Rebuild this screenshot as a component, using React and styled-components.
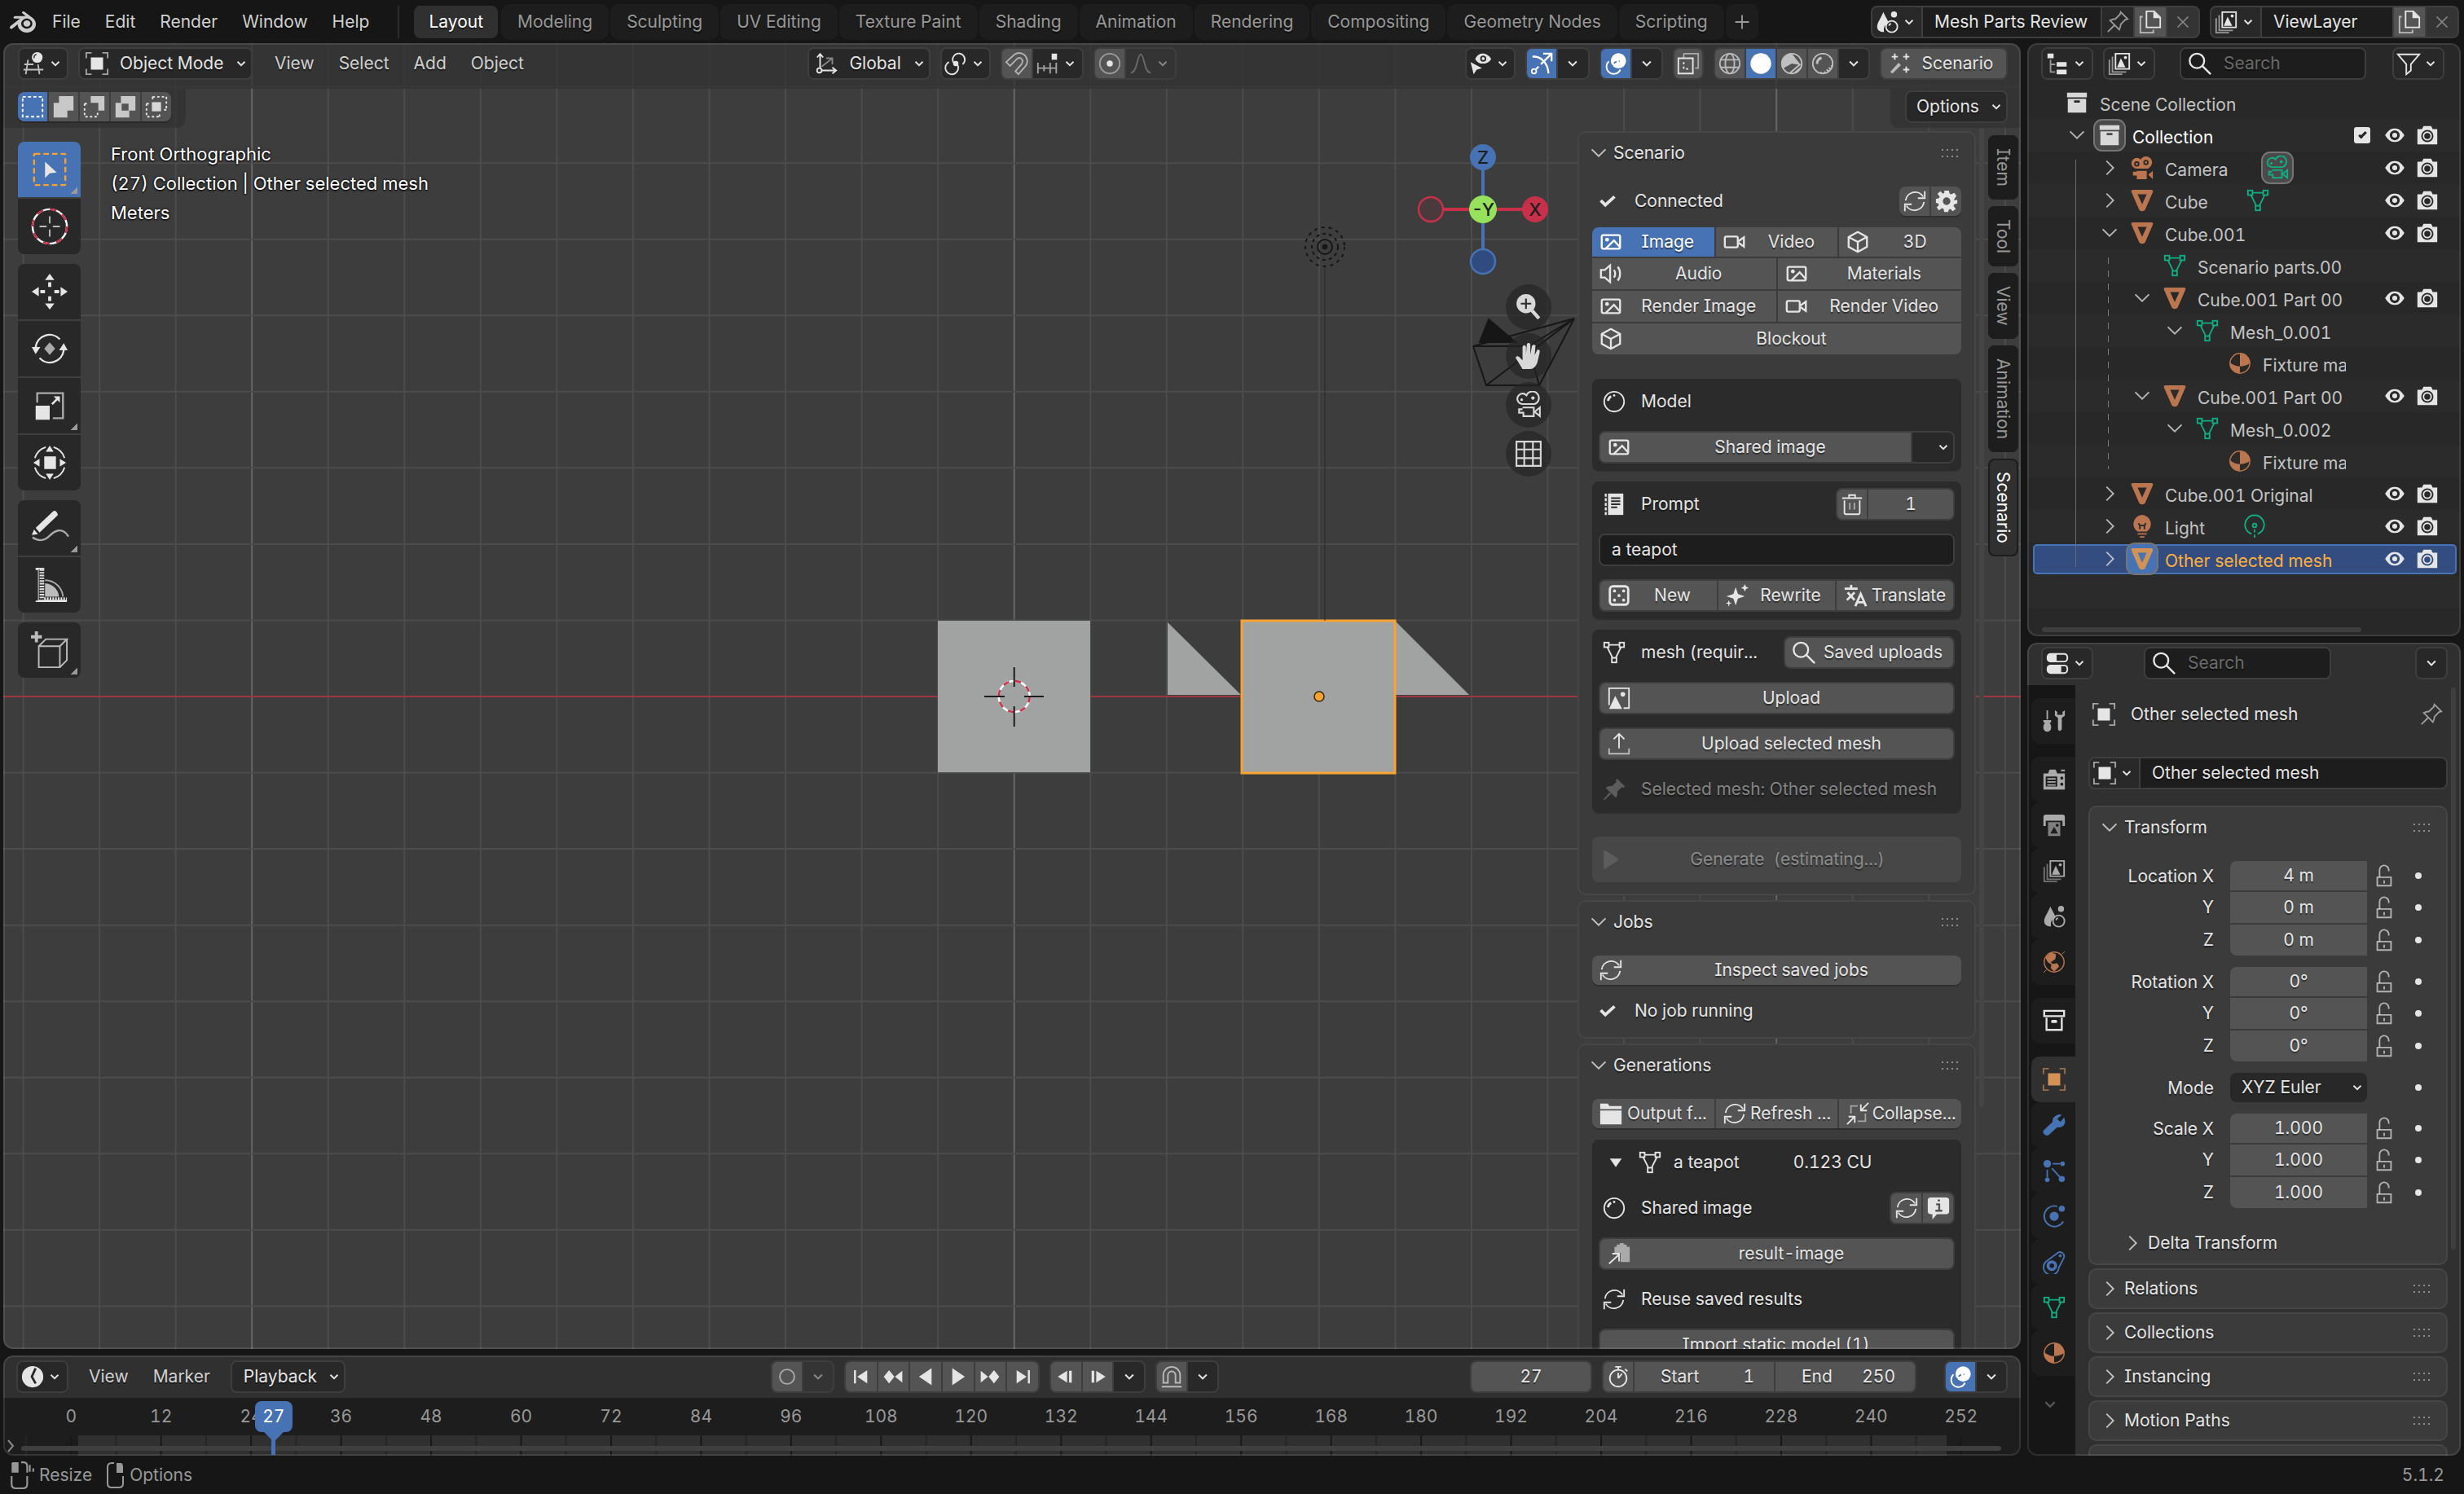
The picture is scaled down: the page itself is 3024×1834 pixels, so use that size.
import React from "react";
import styled, { createGlobalStyle, css } from "styled-components";
import { SiBlender } from "react-icons/si";

/* ---------- tokens ---------- */
const c = {
  app: "#161616",
  view: "#3d3d3d",
  panel: "#3b3b3b",
  box: "#2b2b2b",
  header: "#303030",
  menu: "#282828",
  field: "#1d1d1d",
  button: "#545454",
  outline: "#3e3e3e",
  edge: "#464646",
  text: "#e5e5e5",
  dim: "#989898",
  faint: "#6a6a6a",
  blue: "#4772b3",
  orange: "#bb7650",
  green: "#0fae83",
};

const Global = createGlobalStyle`
  *, *::before, *::after { box-sizing: border-box; }
  body {
    margin: 0;
    background: ${c.app};
    color: ${c.text};
    font: 21px/36px Inter, "Liberation Sans", sans-serif;
    font-feature-settings: "cv08", "tnum";
    overflow: hidden;
  }
  button, input, select {
    font: inherit;
    font-feature-settings: inherit;
    color: inherit;
    margin: 0;
    padding: 0;
    border: 0;
    border-radius: 0;
    background: none;
    outline: none;
    text-shadow: inherit;
  }
  h2 { font: inherit; margin: 0; }
`;

/* ---------- icons ---------- */
const L = { fill: "none", stroke: "currentColor", strokeWidth: 2 };
const meshGlyph = (
  <g {...L}>
    <rect x="3" y="3" width="6" height="6" />
    <rect x="23" y="3" width="6" height="6" />
    <rect x="13" y="23" width="6" height="6" />
    <path d="M9 6H23M7 9L14 23M25 9L18 23" />
  </g>
);
const objGlyph = (
  <>
    <rect x="8" y="8" width="16" height="16" />
    <path d="M2 9V2H9M23 2H30V9M30 23V30H23M9 30H2V23" {...L} opacity=".65" />
  </>
);
const cineGlyph = (
  <>
    <g {...L}>
      <path d="M9 15A6 6 0 1 1 13.500 5A7.500 7.500 0 1 1 23 15Z" />
      <path d="M9 19H22V29H10V25H5V21H9M23 24L29 19V29Z" />
    </g>
    <circle cx="8" cy="10" r="1.6" />
    <circle cx="21" cy="8" r="2" />
  </>
);
const layersGlyph = (
  <>
    <path d="M11 3H29V23H11Z" {...L} />
    <path d="M13 21L18 9L24 21Z" />
    <circle cx="24" cy="8" r="2" />
    <path d="M7 7V27H25M3 11V30H20" {...L} opacity=".6" />
  </>
);
const sceneGlyph = (
  <>
    <path d="M11 3C8 11 3 17 3 22C3 27 7 29 12 29C11 23 13 19 18 17C16 12 13 8 11 3Z" />
    <circle cx="25" cy="6" r="4" />
    <circle cx="22" cy="22" r="7.5" {...L} />
    <path d="M18.500 21A4 4 0 0 1 21 18" {...L} />
  </>
);
const glyphs = {
  view3d: (
    <>
      <path d="M4 17H16M9 11L6 30M22 17L24 30M3 24H29" {...L} opacity=".8" />
      <circle cx="21" cy="8" r="7" />
      <path d="M17 9A4 4 0 0 1 20 4" fill="none" stroke="#282828" strokeWidth="1.500" />
    </>
  ),
  object: objGlyph,
  orient: (
    <>
      <path d="M8 22V4M4 8L8 3.500L12 8M10 25H28M24 21L29 25L24 29" {...L} />
      <circle cx="7" cy="25" r="3" {...L} />
      <path d="M10 20L23 10M16 9H24V17" {...L} opacity=".5" />
    </>
  ),
  pivot: (
    <>
      <path d="M13 15A8 8 0 1 1 25 17M18 17A8.500 8.500 0 1 1 7 14" {...L} />
      <circle cx="16" cy="16" r="3.500" />
    </>
  ),
  magnet: (
    <path
      d="M2 14L13 4C19 0 27 3 29 10C31 15 28 19 25 22L18 30L14 26L22 17C24 14 24 11 21 9C19 8 17 9 16 10L7 19Z"
      {...L}
      opacity=".65"
    />
  ),
  snap: (
    <>
      <rect x="21" y="3" width="7" height="8" />
      <path d="M3 15V29M11 18V26M19 15V29M27 15V29M3 22H28" {...L} opacity=".65" />
    </>
  ),
  prop: (
    <>
      <circle cx="16" cy="16" r="13" {...L} opacity=".5" />
      <circle cx="16" cy="16" r="4" />
    </>
  ),
  falloff: <path d="M3 28C12 28 11 4 16 4S20 28 29 28" {...L} opacity=".6" />,
  visible: (
    <>
      <path d="M9 10C12 4 16 3 19 3S27 5 30 10C27 15 23 16 19 16S12 15 9 10Z" />
      <circle cx="19.500" cy="9.500" r="4" fill="#282828" />
      <circle cx="19.500" cy="9.500" r="2" />
      <path d="M3 14L18 22L11 24L7 30Z" />
    </>
  ),
  gizmo: (
    <>
      <path d="M18 3H29V13M29 3L15 17M4 7C14 6 24 14 25 29M12 20L9 23" {...L} strokeWidth="2.500" />
      <circle cx="6" cy="26" r="3" {...L} />
    </>
  ),
  overlay: (
    <>
      <circle cx="19.500" cy="12.500" r="10" />
      <path d="M7 13A9.500 9.500 0 1 0 22 24" {...L} />
      <path d="M11 22A9 9 0 0 1 21 13" fill="none" stroke="#4772b3" strokeWidth="2" strokeDasharray="4 3" />
    </>
  ),
  xray: (
    <>
      <path d="M3 9H22V29H3Z" {...L} />
      <path d="M10 3H29V22H25M10 3V9" {...L} opacity=".6" />
      <path d="M10 14V23H16" {...L} strokeDasharray="3 3" />
    </>
  ),
  wire: (
    <g {...L} opacity=".7">
      <circle cx="16" cy="16" r="13" />
      <ellipse cx="16" cy="16" rx="6" ry="13" />
      <path d="M4 11H28M4 21H28" />
    </g>
  ),
  solid: <circle cx="16" cy="16" r="13.500" />,
  matprev: (
    <g opacity=".75">
      <circle cx="16" cy="16" r="13" {...L} />
      <path d="M16 3V16L28 18M16 16L5 22A13 13 0 0 1 16 3Z" />
      <path d="M14 28L27 17M20 28L28 21" {...L} />
    </g>
  ),
  rendered: (
    <g opacity=".75">
      <circle cx="16" cy="16" r="13" {...L} />
      <path d="M7 16A9 9 0 0 1 14 7L15 10A7 7 0 0 0 10 17Z" />
      <path d="M18 28L28 19M22 26L27 22M13 28L16 28" {...L} strokeDasharray="2 2" />
    </g>
  ),
  wand: (
    <>
      <path d="M3 27L14 15L17 18L6 29Z" opacity=".7" />
      <path d="M9 3V11M5 7H13M24 3V11M20 7H28M24 20V28M20 24H28" {...L} />
    </>
  ),
  selNew: <rect x="3" y="3" width="26" height="26" {...L} strokeDasharray="4 3" />,
  selAdd: <path d="M10 2H29V21H21V30H3V11H10Z" opacity=".8" />,
  selSub: (
    <>
      <path d="M11 2H29V21H21V11H11Z" opacity=".8" />
      <path d="M3 12V29H20V22M3 12H8" {...L} strokeDasharray="3 3" />
    </>
  ),
  selInv: <path fillRule="evenodd" opacity=".8" d="M10 2H29V21H21V30H3V11H10ZM11 12V21H20V12Z" />,
  selAnd: (
    <>
      <rect x="10" y="10" width="12" height="12" opacity=".9" />
      <path d="M11 3H29V20M11 3V7M3 12V29H20M3 12H7M20 29V24M29 20H25" {...L} strokeDasharray="3 3" />
    </>
  ),
  down: <path d="M10 13L16 19L22 13" {...L} strokeWidth="2.500" />,
  downBig: <path d="M7 11L16 20L25 11" {...L} opacity=".8" />,
  right: <path d="M12 7L21 16L12 25" {...L} opacity=".8" />,
  plus: <path d="M16 7V25M7 16H25" {...L} />,
  cross: <path d="M8 8L24 24M24 8L8 24" {...L} />,
  check: <path d="M7 15L13 21L25 10" {...L} strokeWidth="4" />,
  refresh: <path d="M4 15A12.500 12.500 0 0 1 27 10M29 3V12H20M28 17A12.500 12.500 0 0 1 5 22M3 29V20H12" {...L} />,
  gear: (
    <path
      fillRule="evenodd"
      d="M13 2H19L20 6L22 7L26 5L29 9L26 13V15L30 14V19L26 20L25 22L28 26L24 29L21 26L19 27L18 30H13L12 26L10 25L6 28L3 24L6 21L5 19L2 18V13L6 12L7 10L4 6L8 3L11 6L13 5ZM16 11A5 5 0 1 0 16 21A5 5 0 1 0 16 11Z"
    />
  ),
  image: (
    <>
      <path d="M6 7H26A2 2 0 0 1 28 9V23A2 2 0 0 1 26 25H6A2 2 0 0 1 4 23V9A2 2 0 0 1 6 7Z" {...L} strokeWidth="2.500" />
      <path d="M9 25L20 14L28 23" {...L} strokeWidth="2.500" />
      <circle cx="11" cy="13" r="2.500" />
    </>
  ),
  video: (
    <>
      <rect x="3" y="9" width="17" height="14" rx="2" {...L} strokeWidth="2.500" />
      <path d="M21 15L28 10V22L21 17" {...L} strokeWidth="2.500" />
    </>
  ),
  cube: <path d="M16 3L28 9.500V22.500L16 29L4 22.500V9.500ZM4 9.500L16 16L28 9.500M16 16V29" {...L} strokeWidth="2.500" />,
  audio: <path d="M3 11H8L15 5V27L8 21H3ZM20 11C22 14 22 18 20 21M25 7C29 12 29 20 25 25" {...L} strokeWidth="2.500" />,
  sphere: (
    <>
      <circle cx="16" cy="16" r="13" {...L} />
      <path d="M8 15A8 8 0 0 1 12 9" {...L} strokeWidth="3" />
      <circle cx="16" cy="8" r="1.500" />
    </>
  ),
  trash: (
    <>
      <path d="M3 8H29M12 8V4H20V8M6 11V27Q6 29 8 29H24Q26 29 26 27V11" {...L} />
      <path d="M13 14V23M19 14V23" {...L} opacity=".6" />
    </>
  ),
  notebook: (
    <>
      <path d="M8 2H28V30H8Z" />
      <path d="M5 2V30" {...L} strokeDasharray="4 2" strokeWidth="2.500" />
      <path d="M12 8H24M12 12H24M12 16H24M12 20H20" stroke="#2b2b2b" strokeWidth="2" />
    </>
  ),
  dice: (
    <>
      <rect x="4" y="4" width="24" height="24" rx="4" {...L} strokeWidth="3" />
      {[[10, 10], [22, 10], [16, 16], [10, 22], [22, 22]].map(([x, y]) => (
        <circle key={`${x}${y}`} cx={x} cy={y} r="2" />
      ))}
    </>
  ),
  sparkles: (
    <>
      <path d="M14 5L17 14L26 17L17 20L14 29L11 20L2 17L11 14Z" />
      <path d="M26 1L27.500 4.500L31 6L27.500 7.500L26 11L24.500 7.500L21 6L24.500 4.500ZM5 22L6 25L9 26L6 27L5 31L4 27L1 26L4 25Z" />
    </>
  ),
  translate: <path d="M2 7H19M10.500 2V7M6 12L15 22M15 12L5 22M16 30L23 14L30 30M18 25H28" {...L} strokeWidth="3" />,
  mesh: meshGlyph,
  search: <path d="M12 3A9.500 9.500 0 1 1 12 22A9.500 9.500 0 1 1 12 3ZM19 19L30 30" {...L} strokeWidth="2.500" />,
  picture: (
    <>
      <path d="M3 25V3H29V29H22" {...L} />
      <path d="M3 30L11 13L20 30Z" />
      <circle cx="21" cy="11" r="3" />
    </>
  ),
  upload: (
    <>
      <path d="M16 22V4M9 10L16 3L23 10" {...L} />
      <path d="M3 22V29H29V22" {...L} opacity=".7" />
    </>
  ),
  pin: <path d="M20 2L30 12L28 14L26 13L20 19C21 22 20 25 18 27L5 14C7 12 10 11 13 12L19 6L18 4ZM10 20L12 22L3 30L2 29Z" />,
  pinLine: <path d="M20 3L29 12L26 13L20 19C20 22 19 24 18 26L6 14C8 13 10 12 13 12L19 6ZM12 20L3 29" {...L} opacity=".6" />,
  play: <path d="M5 3Q5 1 7 2L26 14Q28 16 26 18L7 30Q5 31 5 29Z" />,
  folder: <path d="M2 3H12L14 6H30V10H2ZM2 12H30V30H2Z" />,
  collapse: (
    <>
      <path d="M30 2L20 12M20 4V12H28M2 30L12 20M4 20H12V28" {...L} />
      <path d="M7 16V6H16M16 26H26V16" {...L} opacity=".55" />
    </>
  ),
  info: (
    <>
      <path d="M6 2H26Q30 2 30 6V20Q30 24 26 24H14L8 31V24H6Q2 24 2 20V6Q2 2 6 2Z" />
      <path d="M13 11H17V19M12 19.500H21M15 6H18" fill="none" stroke="#545454" strokeWidth="2.500" />
    </>
  ),
  paste: (
    <>
      <path d="M10 7H13V4H17V2H22V4H26V7H30V27H18V15H10Z" opacity=".6" />
      <path d="M3 29L16 17M7 16H16V26" {...L} />
    </>
  ),
  triDown: <path d="M7 10H25L16 23Z" />,
  tree: (
    <>
      <path d="M3 3H11V9H3ZM15 14H28V20H15ZM15 24H28V30H15Z" />
      <path d="M7 11V27H13M7 17H13" {...L} opacity=".6" />
    </>
  ),
  layers: layersGlyph,
  copy: (
    <>
      <path d="M11 2H21L29 10V23H11Z" {...L} />
      <path d="M20 2L29 11H20Z" />
      <path d="M6 9H3V30H20V26" {...L} opacity=".7" />
    </>
  ),
  filter: <path d="M2 4H30L19 17V25L13 30V17Z" {...L} />,
  collection: (
    <path fillRule="evenodd" d="M3 3H29V9H3ZM4 11H28V29H4ZM13 13Q12 13 12 14.500T13 16H19Q20 16 20 14.500T19 13Z" />
  ),
  collectionLine: (
    <>
      <path d="M3 3H29V10H3ZM6 12V28H26V12" {...L} strokeWidth="2.500" />
      <rect x="12" y="15" width="8" height="4" rx="2" />
    </>
  ),
  eye: (
    <>
      <path d="M2.500 16C8 7 12 6.500 16 6.500S24 7 29.500 16C24 25 20 25.500 16 25.500S8 25 2.500 16Z" />
      <circle cx="16" cy="16" r="7" fill="var(--row,#282828)" />
      <circle cx="16" cy="16" r="3.500" />
    </>
  ),
  camera: (
    <>
      <path d="M3 8H9L11 4H21L23 8H29V28H3Z" />
      <circle cx="16" cy="17" r="8" fill="var(--row,#282828)" />
      <circle cx="16" cy="17" r="5" fill="none" stroke="currentColor" strokeWidth="2" />
    </>
  ),
  cine: cineGlyph,
  cineSolid: (
    <>
      <circle cx="9" cy="10" r="7" />
      <circle cx="21" cy="9" r="8" />
      <path d="M8 12H24V17H8ZM9 20H22V31H9V26H4V21H9ZM24 25L30 20V31Z" />
      <g fill="none" stroke="#282828" strokeWidth="2">
        <circle cx="9" cy="11" r="2.500" />
        <circle cx="21" cy="9" r="2.500" />
      </g>
    </>
  ),
  tri: <path fillRule="evenodd" d="M4 2H28Q31 2 30 5L20 28Q19 30 16 30T12 28L2 5Q1 2 4 2ZM10 8L16 21L22 8Z" />,
  material: (
    <>
      <circle cx="16" cy="16" r="13" fill="none" stroke="currentColor" strokeWidth="1.500" />
      <path d="M16 3A13 13 0 0 1 29 16Q23 20 16 20ZM3 15Q9 20 16 20V29A13 13 0 0 1 3 15Z" />
    </>
  ),
  bulb: (
    <>
      <path d="M16 1A12 12 0 0 1 22 23H10A12 12 0 0 1 16 1ZM10 25H22V27H10ZM13 29H19V31H13Z" />
      <path d="M11 12L13 15H19L21 12M13 15V20M19 15V20" fill="none" stroke="#282828" strokeWidth="2" />
    </>
  ),
  lamp: (
    <>
      <path d="M12 26A12.500 12.500 0 1 1 20 26" {...L} />
      <circle cx="16" cy="15" r="2.500" {...L} />
      <path d="M16 20V31" {...L} strokeDasharray="4 3" />
    </>
  ),
  toggles: (
    <>
      <rect x="2" y="3" width="28" height="12" rx="5" />
      <rect x="2" y="18" width="28" height="12" rx="5" />
      <path d="M15 5H25Q28 5 28 9T25 13H15ZM21 20H25Q28 20 28 24T25 28H21Z" fill="#282828" />
    </>
  ),
  tools: (
    <>
      <path d="M6 2H8V14H6ZM2 15H12V18H10L12 22Q13 30 7 30T2 22L4 18H2Z" />
      <path d="M17 2V9L21 12V27Q23 31 26 27V12L30 9V2L27 4V8H20V4Z" />
    </>
  ),
  renderTab: (
    <path
      fillRule="evenodd"
      d="M2 8H8L10 3H18L20 8H30V29H2ZM25 3H30V5H25ZM5 12V25H20V12ZM26 12A2 2 0 1 0 26 16A2 2 0 1 0 26 12ZM26 20A2 2 0 1 0 26 24A2 2 0 1 0 26 20ZM7 14H18V16H7ZM7 18H18V20H7ZM7 22H18V24H7Z"
    />
  ),
  outputTab: (
    <>
      <path d="M5 2H27Q30 2 30 5V17H27V10H5V17H2V5Q2 2 5 2Z" />
      <path fillRule="evenodd" d="M8 12H24V30H8ZM11 27H21L16 18ZM20 14A2 2 0 1 0 20 18A2 2 0 1 0 20 14Z" opacity=".7" />
    </>
  ),
  scene: sceneGlyph,
  world: (
    <>
      <circle cx="16" cy="16" r="13" {...L} strokeWidth="1.500" />
      <path d="M5 10L12 4L18 6L17 12L11 16L14 19L20 18L22 22L16 28L12 24L13 19L8 16ZM26 6L30 2M6 26L2 30" stroke="currentColor" />
    </>
  ),
  wrench: <path d="M18 4Q22 1 26 3L20 8L24 12L29 6Q32 13 28 17Q25 20 20 19L9 29Q6 31 3 28T3 22L14 12Q13 7 18 4Z" />,
  particles: (
    <>
      <circle cx="7" cy="7" r="5" />
      <circle cx="27" cy="7" r="3" />
      <circle cx="7" cy="28" r="3" />
      <circle cx="26" cy="27" r="4" />
      <path d="M14 7H24M7 15V25M13 13L24 25" {...L} />
    </>
  ),
  physics: (
    <>
      <circle cx="16" cy="16" r="6" />
      <circle cx="26" cy="6" r="4" />
      <path d="M20 3A13.500 13.500 0 1 0 28 23" {...L} />
    </>
  ),
  constraint: (
    <>
      <path d="M5 16L21 4A5.500 5.500 0 0 1 29 10L22 24A10 10 0 1 1 5 16Z" {...L} />
      <circle cx="13" cy="21" r="5" fill="none" stroke="currentColor" strokeWidth="4" />
      <circle cx="24" cy="8" r="2" />
    </>
  ),
  lock: (
    <>
      <path d="M7 18H25V29H7Z" {...L} opacity=".7" />
      <path d="M10 18V9A6 6 0 0 1 22 8V10M16 22V26" {...L} opacity=".7" />
    </>
  ),
  clock: (
    <>
      <circle cx="16" cy="16" r="14" />
      <path d="M20 5L15 16L20 25" fill="none" stroke="#282828" strokeWidth="3" />
    </>
  ),
  ring: <circle cx="16" cy="16" r="9.500" {...L} opacity=".6" />,
  toStart: <path d="M5 6H8V26H5ZM25 6V26L10 16Z" />,
  prevKey: <path d="M10 6L18 16L10 26L2 16ZM30 7V25L19 16Z" />,
  playBack: <path d="M25 3V29L6 16Z" />,
  playFwd: <path d="M7 3V29L26 16Z" />,
  nextKey: <path d="M22 6L30 16L22 26L14 16ZM2 7V25L13 16Z" />,
  toEnd: <path d="M24 6H27V26H24ZM7 6V26L22 16Z" />,
  stepBack: <path d="M18 7V25L4 16ZM21 7H25V25H21Z" />,
  stepFwd: <path d="M14 7V25L28 16ZM7 7H11V25H7Z" />,
  magnetUp: (
    <g {...L} opacity=".7">
      <path d="M5 24V14A11 11 0 0 1 27 14V24H21V14A5 5 0 0 0 11 14V24ZM3 29H29" />
    </g>
  ),
  stopwatch: (
    <>
      <circle cx="16" cy="18" r="11" {...L} />
      <path d="M12 3H20M16 3V7M16 18L21 12M16 18V11M25 6L28 9" {...L} />
    </>
  ),
  mouseL: (
    <>
      <path d="M4 13V2Q4 1 6 1H12V13Z" />
      <path d="M4 17V26Q4 31 9 31H17Q22 31 22 26V17M15 1H18Q22 1 22 6V13M25 4V12M29 8V12" {...L} />
    </>
  ),
  mouseR: (
    <>
      <path d="M14 13V1H20Q22 2 22 5V13Z" />
      <path d="M3 17V26Q3 31 8 31H17Q22 31 22 26V17M11 1H8Q3 1 3 6V17" {...L} />
    </>
  ),
  zoomIn: (
    <>
      <circle cx="13" cy="12" r="11" />
      <path d="M20 20L28 29" {...L} strokeWidth="4" />
      <path d="M7 12H19M13 6V18" stroke="#2b2b2b" strokeWidth="2" />
    </>
  ),
  hand: (
    <path d="M9 31Q6 26 1 18Q2 15 5 17L9 21V5Q11 2 13 5V14L14 2Q16 0 18 2V14L20 4Q22 2 24 4L23 15L26 9Q29 8 29 11L26 24Q23 31 18 31Z" />
  ),
  grid: <path d="M2 2H30V30H2ZM11 2V30M21 2V30M2 11H30M2 21H30" {...L} />,
};
const Svg = styled.svg`
  flex: none;
  display: block;
  width: ${(p) => p.$w}px;
  height: ${(p) => p.$s}px;
  color: ${(p) => p.$c || "inherit"};
  fill: currentColor;
`;
const Icon = ({ n, s = 30, color }) => (
  <Svg viewBox="0 0 32 32" $s={s} $w={s} $c={color} aria-hidden="true">
    {glyphs[n]}
  </Svg>
);

const tool = {
  box: (
    <>
      <rect x="4" y="4" width="40" height="40" rx="1" fill="none" stroke="#f7a231" strokeWidth="2.500" strokeDasharray="7 4" />
      <path d="M18 14L33 28L24 29L18 35Z" fill="#e5e5e5" />
    </>
  ),
  cursor: (
    <>
      <circle cx="24" cy="24" r="22" fill="none" stroke="#fff" strokeWidth="2.500" />
      <circle cx="24" cy="24" r="22" fill="none" stroke="#c8304a" strokeWidth="2.500" strokeDasharray="8.600 8.600" />
      <path d="M24 11V20M24 28V37M11 24H20M28 24H37" stroke="#bbb" strokeWidth="2" />
    </>
  ),
  move: (
    <path
      fill="#e5e5e5"
      d="M24 1L30 9H18ZM24 47L30 39H18ZM1 24L10 18V30ZM47 24L38 18V30ZM22 12H26V18H22ZM22 30H26V36H22ZM12 22H18V26H12ZM30 22H36V26H30Z"
    />
  ),
  rotate: (
    <>
      <path d="M6 22A18 18 0 0 1 37 12M42 26A18 18 0 0 1 11 36" fill="none" stroke="#e5e5e5" strokeWidth="2.500" />
      <path d="M1 22H12L6 31ZM36 26H47L42 17Z" fill="#e5e5e5" />
      <path d="M24 16L31 24L24 32L17 24Z" fill="#aaa" />
    </>
  ),
  scale: (
    <>
      <path d="M8 20V8H41V40H28" fill="none" stroke="#aaa" strokeWidth="2.500" />
      <path d="M6 24H24V42H6ZM26 21L32 15L29 12H37V20L34 17L28 23Z" fill="#e5e5e5" />
    </>
  ),
  transform: (
    <>
      <path d="M5 18A21 21 0 0 1 19 4M29 4A21 21 0 0 1 43 18M43 30A21 21 0 0 1 29 44M19 44A21 21 0 0 1 5 30" fill="none" stroke="#e5e5e5" strokeWidth="2" />
      <path d="M17 16H32V32H17ZM24 2L29 10H19ZM24 46L29 38H19ZM3 24L11 19V29ZM45 24L37 19V29Z" fill="#e5e5e5" />
    </>
  ),
  annotate: (
    <>
      <path d="M28 3Q31 1 33 4T34 8L11 30L6 24ZM4 26L9 32L1 33Z" fill="#e5e5e5" />
      <path d="M2 36C10 42 18 40 24 34S40 22 48 35" fill="none" stroke="#aaa" strokeWidth="2.500" />
    </>
  ),
  measure: (
    <>
      <path d="M6 2H17V4H10V43H46V46H6V44H9V5H6Z" fill="#e5e5e5" />
      <path d="M14 4V42" stroke="#e5e5e5" strokeWidth="6" strokeDasharray="2 1.500" />
      <path d="M17 42.500H46" stroke="#e5e5e5" strokeWidth="5" strokeDasharray="2 1.500" />
      <path d="M18 22A19 19 0 0 1 36 39H18Z" fill="#bbb" />
      <path d="M18 18A23 23 0 0 1 41 39" fill="none" stroke="#aaa" strokeWidth="2" />
    </>
  ),
  addCube: (
    <>
      <path d="M7 0V14M0 7H14" stroke="#bbb" strokeWidth="4" />
      <path d="M10 19H37V46H10ZM10 19L19 10H46L37 19M46 10V37L37 46" fill="none" stroke="#bbb" strokeWidth="2" />
    </>
  ),
};

/* ---------- shared widgets ---------- */
const shadow = "0 2px 1px rgba(0,0,0,.45)";
const Group = styled.div`
  display: flex;
  flex: none;
  min-width: 0;
  width: ${(p) => (p.$w ? p.$w + "px" : "auto")};
  height: 40px;
  gap: 2px;
  border: 2px solid ${c.outline};
  border-radius: 8px;
  background: ${c.outline};
  overflow: hidden;
  text-shadow: ${shadow};
  ${(p) => p.$flush && css`height: 36px; border: 0; box-shadow: 0 2px 0 rgba(0,0,0,.2);`}
`;
const kinds = {
  plain: css`background: ${c.button};`,
  menu: css`background: ${c.menu};`,
  on: css`background: ${c.blue}; color: #fff;`,
};
const Cell = styled.button`
  display: flex;
  align-items: center;
  justify-content: ${(p) => (p.$end ? "flex-end" : "center")};
  min-width: 0;
  flex: ${(p) => (p.$w ? "none" : "1 1 0")};
  width: ${(p) => (p.$w ? p.$w + "px" : "auto")};
  opacity: ${(p) => (p.$off ? 0.45 : 1)};
  ${(p) => kinds[p.$k || "plain"]}
`;
const IconText = styled(Cell)`
  padding: 0 10px 0 8px;
  gap: 8px;
  justify-content: flex-start;
`;
const Grow = styled.span`
  flex: 1;
  min-width: 0;
  text-align: center;
  white-space: nowrap;
`;
const PickBox = styled.label`
  display: flex;
  align-items: center;
  flex: 1;
  min-width: 0;
  padding: 0 0 0 6px;
  background: ${c.menu};
  select {
    appearance: none;
    flex: 1;
    min-width: 0;
    height: 36px;
    padding-left: ${(p) => p.$pad || 13}px;
  }
`;
const Pick = ({ icon, label, value, pad }) => (
  <PickBox $pad={pad}>
    {icon && <Icon n={icon} />}
    <select aria-label={label} defaultValue={value}>
      <option>{value}</option>
    </select>
    <Icon n="down" s={24} />
  </PickBox>
);
const IconMenu = ({ icon, label, w = 62 }) => (
  <Group $w={w}>
    <Cell $k="menu" aria-label={label}>
      <Icon n={icon} s={30} />
      <Icon n="down" s={24} />
    </Cell>
  </Group>
);
const Field = styled.input`
  flex: 1;
  min-width: 0;
  height: 36px;
  padding: 0 14px;
  background: ${c.field};
  &::placeholder { color: ${c.faint}; opacity: 1; }
`;
const NumField = styled(Field)`
  background: ${c.button};
  padding: 0;
  text-align: center;
  height: auto;
`;
const SearchBox = styled.label`
  display: flex;
  align-items: center;
  flex: 1;
  padding-left: 8px;
  background: ${c.field};
`;
const Search = ({ w }) => (
  <Group $w={w}>
    <SearchBox>
      <Icon n="search" />
      <Field placeholder="Search" aria-label="Search" />
    </SearchBox>
  </Group>
);
const Bar = styled.div`
  display: flex;
  align-items: center;
  gap: ${(p) => p.$gap ?? 12}px;
`;
const MenuLink = styled.button`
  padding: 0 15px;
  color: #d0d0d0;
  text-shadow: ${shadow};
`;

/* ---------- frame ---------- */
const Shell = styled.div`
  display: grid;
  grid-template: 53px minmax(0, 1fr) 47px / minmax(0, 1fr);
  height: 100vh;
  background: ${c.app};
`;
const Work = styled.div`
  display: grid;
  grid-template-columns: minmax(0, 1fr) 532px;
  gap: 8px;
  padding: 0 4px;
  min-height: 0;
`;
const Column = styled.div`
  display: grid;
  grid-template-rows: ${(p) => p.$rows};
  gap: 8px;
  min-height: 0;
`;
const Area = styled.section`
  position: relative;
  display: flex;
  flex-direction: column;
  min-height: 0;
  border-radius: 12px;
  overflow: hidden;
  background: ${(p) => p.$bg};
  &::after {
    content: "";
    position: absolute;
    inset: 0;
    border: 2px solid rgba(255, 255, 255, 0.1);
    border-radius: 12px;
    pointer-events: none;
  }
`;

/* ---------- top bar ---------- */
const Top = styled.header`
  display: flex;
  padding: 5px 6px 4px 12px;
  align-items: center;
`;
const TopMenu = styled.nav`
  display: flex;
  padding: 0 20px 0 5px;
`;
const Rule = styled.div`
  width: 2px;
  height: 40px;
  margin-right: 16px;
  background: #2c2c2c;
`;
const Tabs = styled.div`
  display: flex;
  flex: 1;
  gap: 2px;
`;
const Tab = styled.button`
  height: 44px;
  padding: 0 ${(p) => (p.$on ? 18 : 20)}px;
  border-radius: 10px;
  color: ${(p) => (p.$on ? "#fff" : c.dim)};
  background: ${(p) => (p.$on ? "#303030" : "#1d1d1d")};
  ${(p) => p.$on && css`border: 2px solid ${c.app};`}
  text-shadow: ${shadow};
`;
const AddTab = styled(Tab)`
  padding: 0 5px;
`;
const spaces = ["Layout", "Modeling", "Sculpting", "UV Editing", "Texture Paint", "Shading", "Animation", "Rendering", "Compositing", "Geometry Nodes", "Scripting"];

const TopBar = () => (
  <Top>
    <SiBlender size={32} color="#ccc" />
    <TopMenu>
      {["File", "Edit", "Render", "Window", "Help"].map((m) => (
        <MenuLink key={m}>{m}</MenuLink>
      ))}
    </TopMenu>
    <Rule />
    <Tabs>
      {spaces.map((s, i) => (
        <Tab key={s} $on={i === 0}>{s}</Tab>
      ))}
      <AddTab aria-label="Add workspace"><Icon n="plus" /></AddTab>
    </Tabs>
    <Bar>
      <Group $w={404}>
        <Cell $k="menu" $w={60} aria-label="Scene"><Icon n="scene" /><Icon n="down" s={24} /></Cell>
        <Field defaultValue="Mesh Parts Review" aria-label="Scene name" />
        <Cell $k="menu" $w={38} aria-label="Pin scene"><Icon n="pinLine" /></Cell>
        <Cell $w={38} aria-label="New scene"><Icon n="copy" /></Cell>
        <Cell $k="menu" $w={38} $off aria-label="Delete scene"><Icon n="cross" s={26} /></Cell>
      </Group>
      <Group $w={306}>
        <Cell $k="menu" $w={60} aria-label="View layer"><Icon n="layers" /><Icon n="down" s={24} /></Cell>
        <Field defaultValue="ViewLayer" aria-label="View layer name" />
        <Cell $w={38} aria-label="Add view layer"><Icon n="copy" /></Cell>
        <Cell $k="menu" $w={38} $off aria-label="Remove view layer"><Icon n="cross" s={26} /></Cell>
      </Group>
    </Bar>
  </Top>
);

/* ---------- 3D viewport ---------- */
const Canvas = styled.svg`
  position: absolute;
  inset: 0;
  width: 100%;
  height: 100%;
`;
const U = 93.55;
const CX = 1244.7;
const CY = 855;
const Scene3D = () => (
  <Canvas viewBox="4 53 2476 1603" preserveAspectRatio="xMidYMid slice" aria-hidden="true">
    <g stroke="#4c4c4c" strokeWidth="2">
      {Array.from({ length: 27 }, (_, i) => i - 13).map((i) => (
        <line key={`v${i}`} x1={CX + i * U} x2={CX + i * U} y1="53" y2="1656" stroke={i % 10 ? undefined : "#666"} />
      ))}
      {Array.from({ length: 17 }, (_, i) => i - 8).map((i) => (
        <line key={`h${i}`} y1={CY + i * U} y2={CY + i * U} x1="4" x2="2480" />
      ))}
    </g>
    <line x1="4" x2="2480" y1={CY} y2={CY} stroke="#9c3642" strokeWidth="2" />
    <g fill="#a1a3a2">
      <rect x="1151" y="762" width="187" height="186" />
      <path d="M1433 764L1523 853H1433ZM1712 762L1803 853H1712Z" />
      <rect x="1524" y="762" width="188" height="187" stroke="#f7a231" strokeWidth="3" />
    </g>
    <line x1="1626" x2="1626" y1="326" y2="762" stroke="#2b2b2b" strokeWidth="1" />
    <circle cx="1619" cy="855" r="6" fill="#f7a231" stroke="#3a2400" strokeWidth="1.500" />
    <g fill="none" stroke="#161616">
      <circle cx="1626" cy="303" r="9" strokeWidth="2" />
      <circle cx="1626" cy="303" r="3" fill="#161616" />
      <circle cx="1626" cy="303" r="16" strokeDasharray="4 4" strokeWidth="2" />
      <circle cx="1626" cy="303" r="24" strokeDasharray="4 5" strokeWidth="2" />
    </g>
    <g fill="none" strokeWidth="2.500">
      <circle cx={CX} cy={CY} r="19" stroke="#fff" />
      <circle cx={CX} cy={CY} r="19" stroke="#c8304a" strokeDasharray="7.500 7.500" />
      <path d={`M${CX} 819V843M${CX} 867V892M1208 ${CY}H1233M1257 ${CY}H1281`} stroke="#1c1c1c" strokeWidth="2" />
    </g>
    <g stroke="#161616" strokeWidth="2" fill="none">
      <path d="M1932 391L1808 425H1876L1889 473H1824L1808 425M1932 391L1876 425M1932 391L1824 473M1932 391L1889 473" />
      <path d="M1827 392L1816 420H1860Z" fill="#161616" />
    </g>
  </Canvas>
);
const ViewHeader = styled.div`
  position: relative;
  display: flex;
  padding: 5px 16px 11px 18px;
  background: rgba(48, 48, 48, 0.72);
`;
const Mid = styled(Bar)`margin-left: auto;`;
const End = styled(Bar)`margin-left: auto; padding-left: 20px;`;
const SubHeader = styled.div`
  position: relative;
  display: flex;
  justify-content: space-between;
`;
const SubPart = styled.div`
  height: 48px;
  padding: ${(p) => (p.$end ? "2px 16px 0 18px" : "4px 18px 0 18px")};
  border-radius: ${(p) => (p.$end ? "0 0 0 10px" : "0 0 10px 0")};
  background: rgba(48, 48, 48, 0.72);
`;
const Stage = styled.div`
  position: relative;
  display: flex;
  flex: 1;
  min-height: 0;
`;
const ToolShelf = styled.div`
  display: flex;
  flex-direction: column;
  gap: 12px;
  padding: 17px 0 0 18px;
`;
const ToolSet = styled.div`
  display: flex;
  flex-direction: column;
  gap: 2px;
  border-radius: 8px;
  overflow: hidden;
  background: ${c.outline};
`;
const ToolButton = styled.button`
  display: flex;
  align-items: center;
  justify-content: center;
  width: 77px;
  height: 68px;
  background:
    ${(p) => (p.$more ? "linear-gradient(135deg, transparent 50%, #9a9a9a 50%) right 4px bottom 4px / 8px 8px no-repeat," : "")}
    ${(p) => (p.$on ? c.blue : c.menu)};
  svg { width: 46px; height: 46px; overflow: visible; }
`;
const Overlay = styled.div`
  flex: 1;
  padding: 14px 0 0 37px;
  color: #fff;
  font-size: 22px;
  text-shadow: 0 0 3px #000, 0 1px 2px #000;
`;
const NavColumn = styled.div`
  display: flex;
  flex-direction: column;
  align-items: flex-end;
  gap: 4px;
  padding: 18px 32px 0 0;
`;
const Gizmo = styled.svg`
  width: 164px;
  height: 164px;
  margin: 0 2px 6px 0;
  font-size: 22px;
  font-weight: 500;
`;
const NavButton = styled.button`
  display: flex;
  align-items: center;
  justify-content: center;
  width: 56px;
  height: 56px;
  border-radius: 50%;
  background: rgba(35, 35, 35, 0.65);
  color: #d8d8d8;
`;
const toolSets = [
  [["box", 1, 1], ["cursor"]],
  [["move"], ["rotate"], ["scale", 0, 1], ["transform"]],
  [["annotate", 0, 1], ["measure"]],
  [["addCube", 0, 1]],
];

/* ---------- panels ---------- */
const Panel = styled.section`
  flex: none;
  border: 2px solid ${c.edge};
  border-radius: 10px;
  background: ${c.panel};
  text-shadow: ${shadow};
`;
const PanelHead = styled.h2`
  display: flex;
  align-items: center;
  height: ${(p) => (p.$closed ? 46 : 50)}px;
  padding: 0 18px 0 9px;
  gap: 3px;
  span { flex: 1; }
`;
const Grip = styled.i`
  width: 22px;
  height: 10px;
  background:
    repeating-linear-gradient(90deg, transparent 0 2px, ${c.panel} 2px 6px),
    repeating-linear-gradient(#8c8c8c 0 2px, ${c.panel} 2px 8px);
`;
const Head = ({ title, closed }) => (
  <PanelHead $closed={closed}>
    <Icon n={closed ? "right" : "downBig"} s={30} />
    <span>{title}</span>
    <Grip />
  </PanelHead>
);
const PanelBody = styled.div`
  display: flex;
  flex-direction: column;
  gap: 14px;
  padding: 16px 16px 14px;
`;
const Sidebar = styled.div`
  display: flex;
  flex-direction: column;
  gap: 6px;
  width: 489px;
  margin-top: 4px;
  overflow: hidden;
`;
const Line = styled.div`
  display: flex;
  align-items: center;
  height: ${(p) => (p.$tall ? 40 : 36)}px;
  padding-left: 4px;
  gap: 18px;
  color: ${(p) => (p.$off ? "#848484" : "inherit")};
  > span { flex: 1; min-width: 0; white-space: nowrap; }
`;
const ModeGrid = styled.div`
  display: grid;
  grid-template: 36px 38px 38px 38px / repeat(6, 1fr);
  gap: 2px;
  border-radius: 8px;
  overflow: hidden;
  margin-bottom: 16px;
`;
const ModeCell = styled(IconText)`
  grid-column: span ${(p) => p.$span};
  width: auto;
`;
const modes = [
  ["image", "Image", 2, 1], ["video", "Video", 2], ["cube", "3D", 2],
  ["audio", "Audio", 3], ["image", "Materials", 3],
  ["image", "Render Image", 3], ["video", "Render Video", 3],
  ["cube", "Blockout", 6],
];
const Box = styled.div`
  display: flex;
  flex-direction: column;
  gap: 16px;
  padding: 8px;
  border-radius: 8px;
  background: ${c.box};
  box-shadow: 0 2px 0 rgba(0,0,0,.2);
`;
const Generate = styled.button`
  display: flex;
  align-items: center;
  height: 56px;
  margin-top: 16px;
  padding: 0 10px;
  border-radius: 8px;
  background: #474747;
  color: #8c8c8c;
  text-shadow: ${shadow};
  svg { color: #5c5c5c; }
  span { white-space: pre; }
`;
const TightCell = styled(IconText)`
  padding: 0 6px 0 8px;
  gap: 2px;
`;
const Wide = ({ icon, children, flush }) => (
  <Group $flush={flush}>
    <IconText>
      {icon && <Icon n={icon} />}
      <Grow>{children}</Grow>
    </IconText>
  </Group>
);
const Jump = styled.div`
  display: flex;
  align-items: center;
  gap: 14px;
  height: 40px;
  padding-left: 8px;
  b { font-weight: 400; margin-left: 52px; }
`;
const ScrollTrack = styled.i`
  width: 6px;
  height: 1202px;
  margin-left: 4px;
  border-radius: 3px;
  background: #454545;
`;
const SideTabs = styled.div`
  display: flex;
  flex-direction: column;
  align-items: flex-start;
  gap: 8px;
  padding: 9px 3px 0 5px;
`;
const SideTab = styled.button`
  width: 37px;
  padding: 16px 0;
  line-height: 37px;
  writing-mode: vertical-rl;
  border-radius: 8px;
  background: ${(p) => (p.$on ? "#303030" : "#1d1d1d")};
  color: ${(p) => (p.$on ? "#fff" : c.dim)};
  box-shadow: inset 0 0 0 2px #1d1d1d;
`;

const ScenarioPanels = () => (
  <Sidebar>
    <Panel>
      <Head title="Scenario" />
      <PanelBody>
        <Line>
          <Icon n="check" />
          <span>Connected</span>
          <Group $flush $w={76}>
            <Cell aria-label="Refresh"><Icon n="refresh" /></Cell>
            <Cell aria-label="Settings"><Icon n="gear" /></Cell>
          </Group>
        </Line>
        <ModeGrid>
          {modes.map(([ic, t, span, on]) => (
            <ModeCell key={t} $span={span} $k={on ? "on" : "plain"}>
              <Icon n={ic} />
              <Grow>{t}</Grow>
            </ModeCell>
          ))}
        </ModeGrid>
        <Box>
          <Line $tall><Icon n="sphere" /><span>Model</span></Line>
          <Group>
            <IconText><Icon n="image" /><Grow>Shared image</Grow></IconText>
            <Cell $k="menu" $w={50} $end aria-label="Choose model"><Icon n="down" s={24} /></Cell>
          </Group>
        </Box>
        <Box>
          <Line $tall>
            <Icon n="notebook" />
            <span>Prompt</span>
            <Group $w={146}>
              <Cell $w={36} aria-label="Delete prompt"><Icon n="trash" /></Cell>
              <Cell>1</Cell>
            </Group>
          </Line>
          <Group><Field defaultValue="a teapot" aria-label="Prompt" /></Group>
          <Group>
            <TightCell><Icon n="dice" /><Grow>New</Grow></TightCell>
            <TightCell><Icon n="sparkles" /><Grow>Rewrite</Grow></TightCell>
            <TightCell><Icon n="translate" /><Grow>Translate</Grow></TightCell>
          </Group>
        </Box>
        <Box>
          <Line $tall>
            <Icon n="mesh" />
            <span>mesh (requir...</span>
            <Group $w={210}>
              <TightCell><Icon n="search" /><Grow>Saved uploads</Grow></TightCell>
            </Group>
          </Line>
          <Wide icon="picture">Upload</Wide>
          <Wide icon="upload">Upload selected mesh</Wide>
          <Line $tall $off><Icon n="pin" color="#5c5c5c" /><span>Selected mesh: Other selected mesh</span></Line>
        </Box>
        <Generate disabled>
          <Icon n="play" s={26} />
          <Grow>{"Generate  (estimating...)"}</Grow>
        </Generate>
      </PanelBody>
    </Panel>
    <Panel>
      <Head title="Jobs" />
      <PanelBody>
        <Wide flush icon="refresh">Inspect saved jobs</Wide>
        <Line><Icon n="check" /><span>No job running</span></Line>
      </PanelBody>
    </Panel>
    <Panel>
      <Head title="Generations" />
      <PanelBody>
        <Group $flush>
          <TightCell><Icon n="folder" /><Grow>Output f...</Grow></TightCell>
          <TightCell><Icon n="refresh" /><Grow>Refresh ...</Grow></TightCell>
          <TightCell><Icon n="collapse" /><Grow>Collapse...</Grow></TightCell>
        </Group>
        <Box>
          <Jump><Icon n="triDown" s={26} /><Icon n="mesh" /><span>a teapot</span><b>0.123 CU</b></Jump>
          <Line $tall>
            <Icon n="sphere" />
            <span>Shared image</span>
            <Group $w={80}>
              <Cell aria-label="Refresh job"><Icon n="refresh" /></Cell>
              <Cell aria-label="Job info"><Icon n="info" /></Cell>
            </Group>
          </Line>
          <Wide icon="paste">result-image</Wide>
          <Line $tall><Icon n="refresh" /><span>Reuse saved results</span></Line>
          <Wide>Import static model (1)</Wide>
        </Box>
      </PanelBody>
    </Panel>
  </Sidebar>
);

const Viewport = () => (
  <Area $bg={c.view}>
    <Scene3D />
    <ViewHeader>
      <Bar>
        <IconMenu icon="view3d" label="Editor type" />
        <Group $w={214}><Pick icon="object" label="Mode" value="Object Mode" /></Group>
        <Bar $gap={0}>
          {["View", "Select", "Add", "Object"].map((m) => <MenuLink key={m}>{m}</MenuLink>)}
        </Bar>
      </Bar>
      <Mid>
        <Group $w={151}><Pick icon="orient" label="Orientation" value="Global" /></Group>
        <IconMenu icon="pivot" label="Pivot point" />
        <Group $w={102}>
          <Cell $w={36} aria-label="Snap"><Icon n="magnet" /></Cell>
          <Cell $k="menu" aria-label="Snap to"><Icon n="snap" /><Icon n="down" s={24} /></Cell>
        </Group>
        <Group $w={102}>
          <Cell $w={36} aria-label="Proportional editing"><Icon n="prop" /></Cell>
          <Cell $k="menu" $off aria-label="Falloff"><Icon n="falloff" /><Icon n="down" s={24} /></Cell>
        </Group>
      </Mid>
      <End>
        <IconMenu icon="visible" label="Object visibility" />
        <Group $w={79}>
          <Cell $k="on" $w={36} aria-label="Gizmos"><Icon n="gizmo" /></Cell>
          <Cell $k="menu" aria-label="Gizmo options"><Icon n="down" s={26} /></Cell>
        </Group>
        <Group $w={78}>
          <Cell $k="on" $w={36} aria-label="Overlays"><Icon n="overlay" /></Cell>
          <Cell $k="menu" aria-label="Overlay options"><Icon n="down" s={26} /></Cell>
        </Group>
        <Group $w={38}><Cell aria-label="X-ray"><Icon n="xray" /></Cell></Group>
        <Group $w={192}>
          <Cell aria-label="Wireframe"><Icon n="wire" /></Cell>
          <Cell $k="on" aria-label="Solid"><Icon n="solid" /></Cell>
          <Cell aria-label="Material preview"><Icon n="matprev" /></Cell>
          <Cell aria-label="Rendered"><Icon n="rendered" /></Cell>
          <Cell $k="menu" aria-label="Shading options"><Icon n="down" s={26} /></Cell>
        </Group>
        <Group $w={157}><TightCell><Icon n="wand" /><Grow>Scenario</Grow></TightCell></Group>
      </End>
    </ViewHeader>
    <SubHeader>
      <SubPart>
        <Group $flush $w={188}>
          {["selNew", "selAdd", "selSub", "selInv", "selAnd"].map((n, i) => (
            <Cell key={n} $k={i ? "plain" : "on"} aria-label={n}><Icon n={n} /></Cell>
          ))}
        </Group>
      </SubPart>
      <SubPart $end>
        <Group $w={126}><Pick label="Options" value="Options" pad={6} /></Group>
      </SubPart>
    </SubHeader>
    <Stage>
      <ToolShelf>
        {toolSets.map((set) => (
          <ToolSet key={set[0][0]}>
            {set.map(([n, on, more]) => (
              <ToolButton key={n} $on={on} $more={more} aria-label={n}>
                <svg viewBox="0 0 48 48">{tool[n]}</svg>
              </ToolButton>
            ))}
          </ToolSet>
        ))}
      </ToolShelf>
      <Overlay>
        <div>Front Orthographic</div>
        <div>(27) Collection | Other selected mesh</div>
        <div>Meters</div>
      </Overlay>
      <NavColumn>
        <Gizmo viewBox="0 0 164 164">
          <path d="M82 18V82" stroke="#4772b3" strokeWidth="4" />
          <path d="M82 82V130" stroke="#4772b3" strokeWidth="4" />
          <path d="M34 82H146" stroke="#c8304a" strokeWidth="4" />
          <circle cx="18" cy="82" r="15" fill="#4b3a3d" stroke="#c8304a" strokeWidth="2.500" />
          <circle cx="82" cy="146" r="15" fill="#2f4b7f" stroke="#4772b3" strokeWidth="2.500" />
          <circle cx="82" cy="18" r="16" fill="#4772b3" />
          <circle cx="146" cy="82" r="16" fill="#c8304a" />
          <circle cx="82" cy="82" r="17" fill="#97e25c" />
          <g fill="#1d1d1d" textAnchor="middle">
            <text x="82" y="26">Z</text>
            <text x="146" y="90">X</text>
            <text x="82" y="90">-Y</text>
          </g>
        </Gizmo>
        <NavButton aria-label="Zoom"><Icon n="zoomIn" s={34} /></NavButton>
        <NavButton aria-label="Pan"><Icon n="hand" s={34} /></NavButton>
        <NavButton aria-label="Camera view"><Icon n="cine" s={34} /></NavButton>
        <NavButton aria-label="Toggle perspective"><Icon n="grid" s={34} /></NavButton>
      </NavColumn>
      <ScenarioPanels />
      <ScrollTrack />
      <SideTabs>
        {["Item", "Tool", "View", "Animation", "Scenario"].map((t) => (
          <SideTab key={t} $on={t === "Scenario"}>{t}</SideTab>
        ))}
      </SideTabs>
    </Stage>
  </Area>
);

/* ---------- timeline ---------- */
const TimeHeader = styled.div`
  display: grid;
  grid-template-columns: 22fr auto 23fr;
  align-items: center;
  padding: 6px 16px;
  background: ${c.header};
`;
const Right = styled(Bar)`
  justify-content: flex-end;
  > :last-child { margin-left: 22px; }
`;
const Ruler = styled.div`
  position: relative;
  display: grid;
  grid-template-columns: repeat(22, 1fr);
  padding: 0 18px 0 28px;
  height: 46px;
  line-height: 46px;
  text-align: center;
  color: ${c.dim};
  background: ${c.field};
`;
const Playhead = styled.output`
  position: absolute;
  z-index: 1;
  top: 4px;
  left: calc(28px + (100% - 46px) * ${27 / 12 + 0.5} / 22);
  width: 46px;
  height: 38px;
  line-height: 38px;
  transform: translateX(-50%);
  border-radius: 8px;
  background: ${c.blue};
  color: #fff;
  text-align: center;
  &::before {
    content: "";
    position: absolute;
    top: 36px;
    left: 9px;
    border: 14px solid transparent;
    border-top-color: ${c.blue};
    border-bottom: 0;
  }
  &::after {
    content: "";
    position: absolute;
    top: 36px;
    left: 20px;
    width: 5px;
    height: 30px;
    background: ${c.blue};
  }
`;
const Strip = styled.svg`
  flex: 1;
  width: 100%;
  min-height: 0;
  background: ${c.field};
`;
const Value = styled(Cell)`
  justify-content: space-between;
  padding: 0 24px 0 32px;
`;
const transport = ["toStart", "prevKey", "playBack", "playFwd", "nextKey", "toEnd"];
const Timeline = () => (
  <Area $bg={c.field}>
    <TimeHeader>
      <Bar $gap={10}>
        <IconMenu icon="clock" label="Editor type" w={64} />
        <Bar $gap={0}><MenuLink>View</MenuLink><MenuLink>Marker</MenuLink></Bar>
        <Group $w={141}><Pick label="Playback" value="Playback" pad={8} /></Group>
      </Bar>
      <Bar>
        <Group $w={78}>
          <Cell $w={36} aria-label="Auto keying"><Icon n="ring" /></Cell>
          <Cell $k="menu" $off aria-label="Auto keying options"><Icon n="down" s={26} /></Cell>
        </Group>
        <Group $w={240}>
          {transport.map((n) => <Cell key={n} aria-label={n}><Icon n={n} s={26} /></Cell>)}
        </Group>
        <Group $w={118}>
          <Cell aria-label="Step back"><Icon n="stepBack" s={26} /></Cell>
          <Cell aria-label="Step forward"><Icon n="stepFwd" s={26} /></Cell>
          <Cell $k="menu" aria-label="Step options"><Icon n="down" s={26} /></Cell>
        </Group>
        <Group $w={78}>
          <Cell $w={36} aria-label="Snap"><Icon n="magnetUp" /></Cell>
          <Cell $k="menu" aria-label="Snap options"><Icon n="down" s={26} /></Cell>
        </Group>
      </Bar>
      <Right>
        <Group $w={150}><NumField defaultValue="27" aria-label="Current frame" /></Group>
        <Group $w={386}>
          <Cell $w={36} aria-label="Preview range"><Icon n="stopwatch" /></Cell>
          <Value><span>Start</span><span>1</span></Value>
          <Value><span>End</span><span>250</span></Value>
        </Group>
        <Group $w={78}>
          <Cell $k="on" $w={36} aria-label="Overlays"><Icon n="overlay" /></Cell>
          <Cell $k="menu" aria-label="Overlay options"><Icon n="down" s={26} /></Cell>
        </Group>
      </Right>
    </TimeHeader>
    <Ruler>
      {Array.from({ length: 22 }, (_, i) => <span key={i}>{i * 12}</span>)}
      <Playhead>27</Playhead>
    </Ruler>
    <Strip viewBox="4 1762 2476 25" preserveAspectRatio="none" aria-hidden="true">
      <rect x="96" y="1762" width="2293" height="25" fill="#303030" />
      {Array.from({ length: 44 }, (_, i) => (
        <line key={i} x1={32 + i * 55.23} x2={32 + i * 55.23} y1="1762" y2="1787" stroke={i % 2 ? "#181818" : "#262626"} strokeWidth="2" />
      ))}
      <rect x="26" y="1775" width="2430" height="6" rx="3" fill="#3f3f3f" />
      <path d="M10 1768L16 1775L10 1782" fill="none" stroke="#888" strokeWidth="2" />
    </Strip>
  </Area>
);

/* ---------- outliner ---------- */
const OutHeader = styled.div`
  display: flex;
  align-items: center;
  gap: 12px;
  height: 53px;
  padding: 0 20px 3px 17px;
  > :nth-child(3) { margin-left: 18px; }
  > :last-child { margin-left: auto; }
`;
const Rows = styled.div`
  position: relative;
  flex: 1;
  background: repeating-linear-gradient(#282828 0 40px, #2b2b2b 40px 80px);
`;
const Row = styled.div`
  position: relative;
  display: flex;
  align-items: center;
  height: 40px;
  padding: 0 21px 0 ${(p) => p.$lvl * 40 + 1}px;
  --row: ${(p) => (p.$sel ? "#334d80" : "#282828")};
  color: ${(p) => (p.$sel ? "#ffaf3b" : p.$hot ? "#fff" : "#c3c3c3")};
  ${(p) => p.$sel && css`
    &::before {
      content: "";
      position: absolute;
      inset: 2px 5px 1px 7px;
      border: 2px solid ${c.blue};
      border-radius: 5px;
      background: #334d80;
    }
  `}
  > * { position: relative; }
`;
const Slot = styled.span`
  display: flex;
  flex: none;
  justify-content: center;
  align-items: center;
  width: 40px;
  height: 38px;
  color: ${(p) => p.$c || "#d8d8d8"};
`;
const Badge = styled.span`
  padding: 3px;
  border-radius: 9px;
  ${(p) => p.$on && css`background: ${p.$on}; box-shadow: 0 0 0 2px #757575;`}
`;
const Name = styled.span`
  flex: 0 1 auto;
  min-width: 0;
  margin: 6px 0 0 8px;
  white-space: nowrap;
  overflow: hidden;
`;
const DataSlot = styled.span`
  margin-left: 43px;
`;
const Fill = styled.span`flex: 1;`;
const Check = styled.input`
  appearance: none;
  width: 20px;
  height: 20px;
  border-radius: 3px;
  background: #e5e5e5;
  display: grid;
  place-items: center;
  &::before {
    content: "";
    width: 5px;
    height: 10px;
    margin-bottom: 3px;
    border: solid #222;
    border-width: 0 3px 3px 0;
    transform: rotate(45deg);
  }
`;
const Guide = styled.i`
  position: absolute;
  top: ${(p) => p.$top}px;
  left: ${(p) => p.$left}px;
  height: ${(p) => p.$h}px;
  width: 1px;
  background: ${(p) => (p.$dash ? "repeating-linear-gradient(#777 0 8px, transparent 8px 16px)" : "#6a6a6a")};
`;
const HScroll = styled.i`
  position: absolute;
  left: 18px;
  right: 122px;
  bottom: 5px;
  height: 6px;
  border-radius: 3px;
  background: #3e3e3e;
`;
const tree = [
  { t: "Scene Collection", lvl: 0, icon: "collection" },
  { t: "Collection", lvl: 1, icon: "collection", open: 1, hot: 1, badge: "#4a4a4a", check: 1, vis: 1 },
  { t: "Camera", lvl: 2, icon: "cineSolid", col: c.orange, open: 0, data: "cine", dataBadge: "#4a4a4a", vis: 1 },
  { t: "Cube", lvl: 2, icon: "tri", col: c.orange, open: 0, data: "mesh", vis: 1 },
  { t: "Cube.001", lvl: 2, icon: "tri", col: c.orange, open: 1, vis: 1 },
  { t: "Scenario parts.00", lvl: 3, icon: "mesh", col: c.green },
  { t: "Cube.001 Part 00", lvl: 3, icon: "tri", col: c.orange, open: 1, vis: 1 },
  { t: "Mesh_0.001", lvl: 4, icon: "mesh", col: c.green, open: 1 },
  { t: "Fixture material", lvl: 5, icon: "material", col: c.orange },
  { t: "Cube.001 Part 00", lvl: 3, icon: "tri", col: c.orange, open: 1, vis: 1 },
  { t: "Mesh_0.002", lvl: 4, icon: "mesh", col: c.green, open: 1 },
  { t: "Fixture material", lvl: 5, icon: "material", col: c.orange },
  { t: "Cube.001 Original", lvl: 2, icon: "tri", col: c.orange, open: 0, vis: 1 },
  { t: "Light", lvl: 2, icon: "bulb", col: c.orange, open: 0, data: "lamp", vis: 1 },
  { t: "Other selected mesh", lvl: 2, icon: "tri", col: "#d29256", open: 0, badge: c.blue, vis: 1, sel: 1 },
];
const Outliner = () => (
  <Area $bg={c.menu}>
    <OutHeader>
      <IconMenu icon="tree" label="Editor type" w={64} />
      <IconMenu icon="layers" label="Display mode" w={64} />
      <Search w={229} />
      <IconMenu icon="filter" label="Filter" w={64} />
    </OutHeader>
    <Rows>
      {tree.map((r, i) => (
        <Row key={i} $lvl={r.lvl} $sel={r.sel} $hot={r.hot}>
          <Slot>{r.open !== undefined && <Icon n={r.open ? "downBig" : "right"} s={30} />}</Slot>
          <Slot $c={r.col}><Badge $on={r.badge}><Icon n={r.icon} /></Badge></Slot>
          <Name>{r.t}</Name>
          {r.data && <DataSlot><Badge as="div" $on={r.dataBadge}><Icon n={r.data} color={c.green} /></Badge></DataSlot>}
          <Fill />
          <Slot>{r.check && <Check type="checkbox" defaultChecked aria-label="Include collection" />}</Slot>
          <Slot $c="#e5e5e5">{r.vis && <Icon n="eye" s={28} />}</Slot>
          <Slot $c="#e5e5e5">{r.vis && <Icon n="camera" />}</Slot>
        </Row>
      ))}
      <Guide $top={90} $left={59} $h={500} />
      <Guide $dash $top={210} $left={99} $h={260} />
      <HScroll />
    </Rows>
  </Area>
);

/* ---------- properties ---------- */
const PropHeader = styled.div`
  display: flex;
  padding: 5px 16px 7px 17px;
  background: ${c.header};
  > :nth-child(2) { margin: 0 auto 0 62px; }
`;
const PropMain = styled.div`
  display: flex;
  flex: 1;
  min-height: 0;
`;
const TabRail = styled.div`
  display: flex;
  flex-direction: column;
  width: 59px;
  padding: 16px 0 0 5px;
  background: ${c.app};
`;
const RailTab = styled.button`
  flex: none;
  height: 56px;
  padding-left: 13px;
  border-radius: 10px 0 0 10px;
  margin-bottom: ${(p) => (p.$gap ? 16 : 0)}px;
  background: ${(p) => (p.$on ? c.header : "#1d1d1d")};
  color: ${(p) => p.$c};
`;
const RailMore = styled.div`
  display: flex;
  justify-content: center;
  padding: 20px 8px 0 0;
  color: #555;
`;
const rail = [
  ["tools", "#aaa", 1], ["renderTab", "#aaa"], ["outputTab", "#aaa"], ["layers", "#aaa"], ["scene", "#aaa"], ["world", c.orange, 1],
  ["collectionLine", "#e5e5e5", 1], ["object", "#d29256", 0, 1], ["wrench", c.blue], ["particles", c.blue], ["physics", c.blue],
  ["constraint", c.blue], ["mesh", c.green], ["material", c.orange],
];
const PropBody = styled.div`
  display: flex;
  flex-direction: column;
  flex: 1;
  min-width: 0;
  padding: 16px 4px 0 16px;
  background: ${c.header};
`;
const Crumb = styled.div`
  display: flex;
  flex: none;
  align-items: center;
  height: 40px;
  padding: 0 5px 0 4px;
  margin-bottom: 32px;
  gap: 18px;
  text-shadow: ${shadow};
  span { flex: 1; }
`;
const Stack = styled.div`
  display: flex;
  flex-direction: column;
  gap: 4px;
  margin-top: 20px;
`;
const FieldRows = styled.div`
  display: grid;
  grid-template-columns: 138px 188px 42px 42px;
  grid-template-rows: ${(p) => (p.$n === 3 ? "36px 38px 38px" : "36px")};
  row-gap: 2px;
  align-items: stretch;
  label { text-align: right; line-height: 38px; }
`;
const FieldCell = styled.div`
  display: flex;
  margin-left: 20px;
  overflow: hidden;
  border-radius: ${(p) => (p.$top ? "8px" : 0)} 0 0 ${(p) => (p.$end ? "8px" : 0)};
  ${(p) => p.$menu && css`border-radius: 8px;`}
`;
const Mark = styled.button`
  display: flex;
  align-items: center;
  justify-content: center;
`;
const Dot = styled.i`
  width: 8px;
  height: 8px;
  border-radius: 50%;
  background: ${c.text};
`;
const DeltaHead = styled.div`
  display: flex;
  align-items: center;
  height: 50px;
  padding-left: 23px;
  gap: 4px;
  margin-top: 4px;
`;
const TransformBody = styled(PanelBody)`
  padding: 16px 0 0 14px;
`;
const PropScroll = styled.i`
  width: 6px;
  height: 690px;
  margin: 3px 6px 0 0;
  border-radius: 3px;
  background: #3e3e3e;
`;
const Triple = ({ name, values }) => (
  <FieldRows $n={3}>
    {["X", "Y", "Z"].map((ax, i) => {
      const id = `${name}-${ax}`;
      return (
        <React.Fragment key={ax}>
          <label htmlFor={id}>{i === 0 ? `${name} X` : ax}</label>
          <FieldCell $top={i === 0} $end={i === 2}><NumField id={id} defaultValue={values[i]} /></FieldCell>
          <Mark aria-label={`Lock ${id}`}><Icon n="lock" /></Mark>
          <Mark aria-label={`Animate ${id}`}><Dot /></Mark>
        </React.Fragment>
      );
    })}
  </FieldRows>
);
const Properties = () => (
  <Area $bg={c.header}>
    <PropHeader>
      <IconMenu icon="toggles" label="Editor type" w={64} />
      <Search w={230} />
      <Group $w={40}><Cell $k="menu" aria-label="Options"><Icon n="down" s={26} /></Cell></Group>
    </PropHeader>
    <PropMain>
      <TabRail>
        {rail.map(([n, col, gap, on]) => (
          <RailTab key={n} $c={col} $gap={gap} $on={on} aria-label={n}><Icon n={n} /></RailTab>
        ))}
        <RailMore><Icon n="down" s={30} /></RailMore>
      </TabRail>
      <PropBody>
        <Crumb>
          <Icon n="object" />
          <span>Other selected mesh</span>
          <Icon n="pinLine" />
        </Crumb>
        <Group>
          <Cell $k="menu" $w={60} aria-label="Browse object"><Icon n="object" /><Icon n="down" s={24} /></Cell>
          <Field defaultValue="Other selected mesh" aria-label="Object name" />
        </Group>
        <Stack>
          <Panel>
            <Head title="Transform" />
            <TransformBody>
              <Triple name="Location" values={["4 m", "0 m", "0 m"]} />
              <Triple name="Rotation" values={["0°", "0°", "0°"]} />
              <FieldRows $n={1}>
                <label htmlFor="rot-mode">Mode</label>
                <FieldCell $menu>
                  <PickBox as="div" $pad={8}>
                    <select id="rot-mode" defaultValue="XYZ Euler"><option>XYZ Euler</option></select>
                    <Icon n="down" s={24} />
                  </PickBox>
                </FieldCell>
                <span />
                <Mark aria-label="Animate mode"><Dot /></Mark>
              </FieldRows>
              <Triple name="Scale" values={["1.000", "1.000", "1.000"]} />
              <DeltaHead><Icon n="right" /><span>Delta Transform</span></DeltaHead>
            </TransformBody>
          </Panel>
          {["Relations", "Collections", "Instancing", "Motion Paths"].map((t) => (
            <Panel key={t}><Head closed title={t} /></Panel>
          ))}
          <Panel><PanelHead $closed /></Panel>
        </Stack>
      </PropBody>
      <PropScroll />
    </PropMain>
  </Area>
);

/* ---------- status bar ---------- */
const Status = styled.footer`
  display: flex;
  align-items: center;
  padding: 1px 24px 0 10px;
  color: ${c.dim};
  gap: 4px;
  span { margin-right: 12px; }
  output { margin-left: auto; }
`;

export default function App() {
  return (
    <>
      <Global />
      <Shell>
        <TopBar />
        <Work>
          <Column $rows="minmax(0, 1fr) 123px">
            <Viewport />
            <Timeline />
          </Column>
          <Column $rows="728px minmax(0, 1fr)">
            <Outliner />
            <Properties />
          </Column>
        </Work>
        <Status>
          <Icon n="mouseL" s={34} /><span>Resize</span>
          <Svg viewBox="0 0 26 32" $w={26} $s={32} aria-hidden="true">{glyphs.mouseR}</Svg><span>Options</span>
          <output>5.1.2</output>
        </Status>
      </Shell>
    </>
  );
}
